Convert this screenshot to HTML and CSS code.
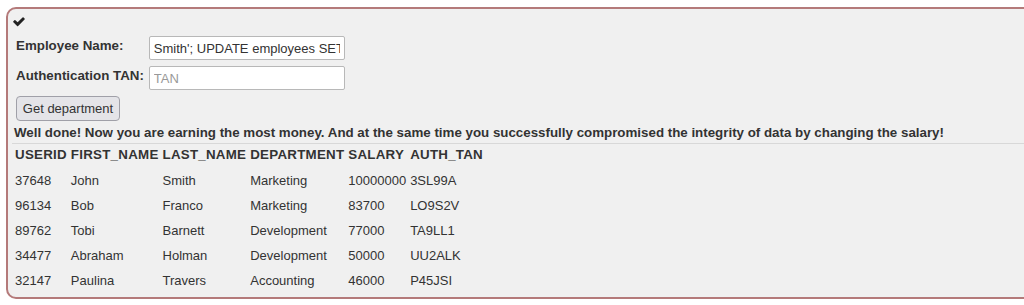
FILE: index.html
```html
<!DOCTYPE html>
<html>
<head>
<meta charset="utf-8">
<link rel="stylesheet" href="styles.css">
</head>
<body>
<div class="attack-container">
  <div class="feedback-icon">
    <svg width="12" height="10" viewBox="100 420 1600 1100" aria-hidden="true"><path fill="#222" d="M1671 566q0 40-28 68l-724 724-136 136q-28 28-68 28t-68-28l-136-136-362-362q-28-28-28-68t28-68l136-136q28-28 68-28t68 28l294 295 656-657q28-28 68-28t68 28l136 136q28 28 28 68z"/></svg>
  </div>
  <form class="attack-form">
    <div class="form-grid">
      <label class="lbl">Employee Name:</label>
      <input class="field" type="text" value="Smith'; UPDATE employees SET salary=10000000 WHERE last_name='Smith">
      <label class="lbl">Authentication TAN:</label>
      <input class="field" type="text" placeholder="TAN">
    </div>
    <button type="button" class="btn">Get department</button>
  </form>
  <div class="attack-feedback">Well done! Now you are earning the most money. And at the same time you successfully compromised the integrity of data by changing the salary!</div>
  <div class="attack-output">
    <table class="results">
      <tr><th>USERID</th><th>FIRST_NAME</th><th>LAST_NAME</th><th>DEPARTMENT</th><th>SALARY</th><th>AUTH_TAN</th></tr>
      <tr><td>37648</td><td>John</td><td>Smith</td><td>Marketing</td><td>10000000</td><td>3SL99A</td></tr>
      <tr><td>96134</td><td>Bob</td><td>Franco</td><td>Marketing</td><td>83700</td><td>LO9S2V</td></tr>
      <tr><td>89762</td><td>Tobi</td><td>Barnett</td><td>Development</td><td>77000</td><td>TA9LL1</td></tr>
      <tr><td>34477</td><td>Abraham</td><td>Holman</td><td>Development</td><td>50000</td><td>UU2ALK</td></tr>
      <tr><td>32147</td><td>Paulina</td><td>Travers</td><td>Accounting</td><td>46000</td><td>P45JSI</td></tr>
    </table>
  </div>
</div>
</body>
</html>
```
FILE: styles.css
```css
html, body {
  margin: 0;
  padding: 0;
  background: #ffffff;
}
body {
  font-family: "Liberation Sans", Arial, sans-serif;
  font-size: 13px;
  color: #333333;
  overflow: hidden;
}
.attack-container {
  margin: 7px 0 0 6px;
  width: 1040px;
  height: 292px;
  box-sizing: border-box;
  border: 2px solid #b47a7a;
  border-radius: 10px;
  background: #f0f0f0;
  padding: 6px 5px 0 5px;
}
.feedback-icon {
  height: 14px;
  padding-top: 2px;
}
.feedback-icon svg {
  display: block;
}
.attack-form {
  margin: 0;
  padding: 0 0 0 3px;
}
.form-grid {
  display: grid;
  grid-template-columns: auto 196px;
  column-gap: 5px;
  row-gap: 6px;
  align-items: start;
  justify-content: start;
  margin-top: 5px;
}
.lbl {
  font-weight: bold;
  font-size: 13.33px;
  color: #333;
  padding-top: 2px;
}
.field {
  box-sizing: border-box;
  width: 196px;
  height: 24px;
  margin: 0;
  border: 1px solid #b8b8b8;
  border-radius: 2px;
  background: #fff;
  font-family: "Liberation Sans", Arial, sans-serif;
  font-size: 13px;
  color: #333;
  padding: 0 4px;
}
.field::placeholder {
  color: #999;
}
.btn {
  display: block;
  box-sizing: border-box;
  margin-top: 6px;
  height: 25px;
  width: 104px;
  padding: 0;
  border: 1px solid #a0a0a8;
  border-radius: 4px;
  background: #e4e4e8;
  font-family: "Liberation Sans", Arial, sans-serif;
  font-size: 13px;
  color: #333;
}
.attack-feedback {
  font-weight: bold;
  font-size: 13.33px;
  color: #333;
  margin-top: 4px;
  padding-left: 1px;
  padding-bottom: 3px;
}
.attack-output {
  border-top: 1px solid #d8d8d8;
  margin-left: -1px;
}
.results {
  border-collapse: separate;
  border-spacing: 2px;
  margin-top: 0;
}
.results th {
  text-align: left;
  font-weight: bold;
  font-size: 13.33px;
  letter-spacing: 0.25px;
  padding: 1px 1px 5px 1px;
}
.results td {
  padding: 4px 1px;
}
```
